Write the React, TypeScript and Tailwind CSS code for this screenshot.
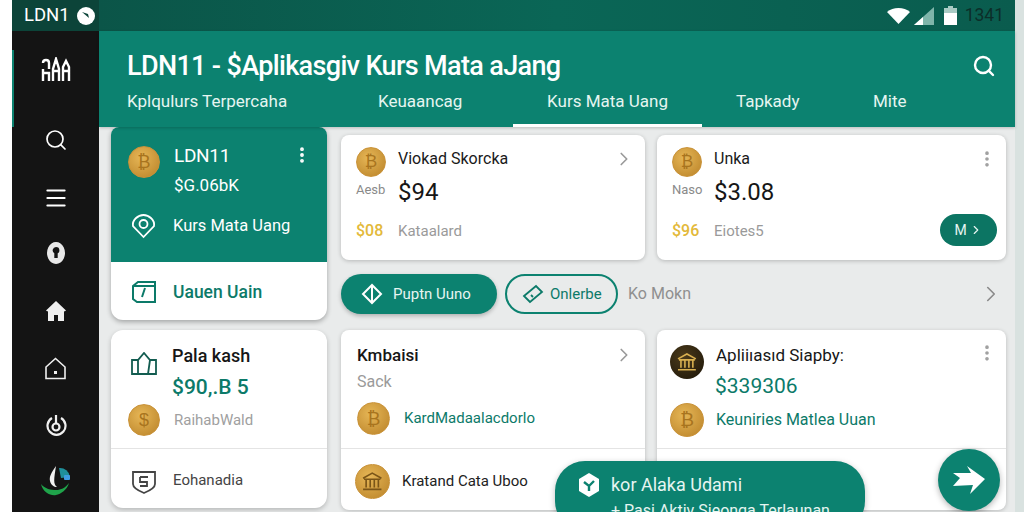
import React from 'react';
import { ChevronRight, EllipsisVertical, Menu, Search } from 'lucide-react';

const Coin = ({ size = 32, dark = false, bank = false, glyph = '₿' }: { size?: number; dark?: boolean; bank?: boolean; glyph?: string }) => (
  <div
    className={`shrink-0 rounded-full flex items-center justify-center font-['Liberation_Sans',sans-serif] ${
      dark
        ? 'bg-[radial-gradient(circle_at_40%_35%,#4a3a1a,#1c1408)] text-[#d9b050]'
        : 'bg-[radial-gradient(circle_at_40%_35%,#e6b656,#b98228)] text-[#a8741e] border border-[#c99238]'
    }`}
    style={{ width: size, height: size, fontSize: size * 0.56 }}
  >
    {bank ? (
      <svg viewBox="0 0 24 24" width={size * 0.7} height={size * 0.7} fill="none" stroke={dark ? '#d9b050' : '#7a5518'} strokeWidth="1.600">
        <path d="M3 9l9-5 9 5M4 10h16M6 10v8M10 10v8M14 10v8M18 10v8M3 20h18" />
      </svg>
    ) : (
      glyph
    )}
  </div>
);

const Rail = () => (
  <aside className="w-[87px] shrink-0 bg-[#141414] flex flex-col items-center text-white">
    <div className="w-full h-[31px] bg-[#0c4439] flex items-center pl-3 gap-[7px]">
      <span className="text-[18.500px] leading-none">LDN1</span>
      <svg width="18" height="18" viewBox="0 0 18 18"><circle cx="9" cy="9" r="9" fill="#fff" /><path d="M5 5l6 2 1 4z" fill="#0c4439" /></svg>
    </div>
    <div className="w-full flex flex-col items-center h-[96px] pt-[26px] relative">
      <div className="absolute left-0 top-[19px] bottom-0 w-[1.500px] bg-[#0c8270]" />
      <svg width="30" height="26" viewBox="0 0 30 26" fill="none" stroke="#fff" strokeWidth="2.400">
        <path d="M2 24V12M2 6c0-4 6-4 6 0v6M2 16h6v8M12 24V12l3-10 3 10v12M12 14h6M22 24V10l3-6 3 6v14M22 14h6M8 24V20" />
      </svg>
    </div>
    <Search className="mt-[1px]" size={24} strokeWidth={1.700} />
    <Menu className="mt-[33px]" size={26} strokeWidth={1.800} />
    <svg className="mt-[30px]" width="20" height="24" viewBox="0 0 20 24" fill="#e8e8e8">
      <path fillRule="evenodd" d="M10 1a9 11 0 1 0 .01 0zM10 6a3.400 3.400 0 0 1 3.400 3.400c0 1.300-.7 2.300-1.700 2.900V17h-3.400v-4.700A3.400 3.400 0 0 1 10 6z" />
    </svg>
    <svg className="mt-[35px]" width="22" height="22" viewBox="0 0 22 22" fill="#f0f0f0">
      <path d="M11 1l10 9.500-1.400 1L19 11v10h-6v-6H9v6H3V11l-.6.500L1 10.500z" />
    </svg>
    <svg className="mt-[35px]" width="23" height="23" viewBox="0 0 23 23" fill="none" stroke="#f0f0f0" strokeWidth="1.600">
      <path d="M2 10l9.500-8.500L21 10v11.500H2z" />
      <rect x="10" y="14" width="3" height="3" fill="#f0f0f0" stroke="none" />
    </svg>
    <svg className="mt-[33px]" width="22" height="24" viewBox="0 0 22 24" fill="none" stroke="#f0f0f0" strokeWidth="2.200">
      <path d="M7 5a9 9 0 1 0 9 0" />
      <circle cx="11" cy="14" r="3.500" />
      <path d="M11 2v8" />
    </svg>
    <svg className="mt-[27px]" width="32" height="32" viewBox="0 0 32 32" fill="none">
      <path d="M1 20c2 9 10 12 15 11s11-5 13-12c-4 5-8 7-13 7S5 25 1 20z" fill="#1fa34a" />
      <path d="M16 2c-5 7-7 11-6 15s4 6 7 6c-4-3-3-8-1-21z" fill="#f2f2f2" />
      <path d="M19 4a10 10 0 0 1 11 9l-9 1z" fill="#1f8f9a" />
      <rect x="24" y="11" width="6" height="5" rx="1" fill="#3f9be0" />
    </svg>
  </aside>
);

const StatusBar = () => (
  <div className="h-[31px] shrink-0 bg-[linear-gradient(90deg,#0b5548,#0a6656_50%,#0a5c4e)] flex items-center justify-end pr-[11px]">
    <svg width="23" height="16" viewBox="0 0 23 16" fill="#fff"><path d="M0 4c6-5.300 17-5.300 23 0L11.500 16z" /></svg>
    <svg className="ml-[4px]" width="20" height="18" viewBox="0 0 20 18"><path d="M0 18L20 0v18z" fill="#7fb5aa" /><path d="M0 18l9-8v8z" fill="#fff" /></svg>
    <svg className="ml-[10px]" width="13" height="19" viewBox="0 0 13 19"><path d="M4 0h5v2h4v17H0V2h4z" fill="#a9cbc4" /><rect y="7" width="13" height="12" fill="#fff" /></svg>
    <span className="ml-[8px] text-[17.500px] leading-none text-[#0c2e29]">1341</span>
  </div>
);

const Header = () => (
  <header className="h-[96px] shrink-0 bg-[#0c8270] text-white relative shadow-[0_1px_3px_rgba(0,0,0,0.2)]">
    <div className="flex items-center justify-between pl-[28px] pr-[19px] pt-[17px]">
      <h1 className="text-[27px] leading-[36px] font-medium whitespace-nowrap tracking-[-0.650px]">LDN11 - $Aplikasgiv Kurs Mata aJang</h1>
      <Search size={24} strokeWidth={2.400} />
    </div>
    <nav className="flex items-end h-[43px] text-[17px] text-[#e6f5f1]">
      <span className="ml-[28px] w-[251px] pb-[13px] whitespace-nowrap">Kplqulurs Terpercaha</span>
      <span className="w-[135px] pb-[13px] whitespace-nowrap">Keuaancag</span>
      <span className="w-[189px] h-full flex items-end justify-center pb-[10px] border-b-[3px] border-white whitespace-nowrap">Kurs Mata Uang</span>
      <span className="ml-[34px] w-[137px] pb-[13px] whitespace-nowrap">Tapkady</span>
      <span className="pb-[13px]">Mite</span>
    </nav>
  </header>
);

const FeatureColumn = () => (
  <div className="w-[216px] shrink-0 flex flex-col gap-[10px]">
    <div className="h-[193px] rounded-b-xl rounded-t-lg overflow-hidden bg-white shadow-[0_2px_5px_rgba(0,0,0,0.3)] flex flex-col">
      <div className="h-[135px] bg-[#0c8270] text-white pl-[17px] pr-[17px] pt-[19px]">
        <div className="flex items-start gap-[14px]">
          <Coin size={32} />
          <div className="flex-1 -mt-[2px]">
            <div className="text-[19px] leading-[24px] tracking-[-0.300px]">LDN11</div>
            <div className="text-[17px] leading-[24px] mt-[5px]">$G.06bK</div>
          </div>
          <EllipsisVertical size={20} strokeWidth={2.600} className="-mt-[1px] -mr-[2px]" />
        </div>
        <div className="flex items-center gap-[17px] mt-[16px] pl-[3px]">
          <svg width="25" height="26" viewBox="0 0 25 26" fill="none" stroke="#fff" strokeWidth="1.800">
            <path d="M12.500 24L2 13c-1-6 5-11 10.500-11S24 7 23 13z" />
            <circle cx="12.500" cy="11" r="4" />
          </svg>
          <span className="text-[16.500px] leading-none whitespace-nowrap">Kurs Mata Uang</span>
        </div>
      </div>
      <div className="flex-1 flex items-center gap-[16px] pl-[20px] pt-[3px] text-[#0c7a69]">
        <svg width="26" height="26" viewBox="0 0 26 26" fill="none" stroke="currentColor" strokeWidth="2">
          <path d="M2 6l5-4h17v20H6l-4-3zM2 6h22M11 17l3-9" />
        </svg>
        <span className="text-[17.500px] font-medium">Uauen Uain</span>
      </div>
    </div>
    <div className="h-[178px] rounded-xl bg-white shadow-[0_2px_5px_rgba(0,0,0,0.22)] flex flex-col">
      <div className="h-[118px] pl-[17px] pt-[14px] relative">
        <div className="flex items-start gap-[14px]">
          <svg className="mt-[8px] ml-[3px] mr-[1px]" width="26" height="23" viewBox="0 0 26 23" fill="none" stroke="#125c50" strokeWidth="1.800">
            <path d="M1 8h6l6-7 6 7h6v14H1zM7 8v14M19 8l-2 14" />
          </svg>
          <div>
            <div className="text-[18px] leading-[24px] font-medium text-[#161616]">Pala kash</div>
            <div className="text-[21px] leading-[26px] mt-[6px] text-[#0c7a69] font-medium">$90,.B 5</div>
          </div>
        </div>
        <div className="flex items-center gap-[14px] mt-[4px]">
          <Coin size={32} glyph="$" />
          <span className="text-[15px] text-[#a0a0a0]">RaihabWald</span>
        </div>
      </div>
      <div className="flex-1 border-t border-[#e4e4e4] flex items-center gap-[16px] pl-[20px] pt-[4px]">
        <svg width="26" height="26" viewBox="0 0 26 26" fill="none" stroke="#444" strokeWidth="1.800">
          <path d="M2 4h22v12c0 4-6 7-11 9-5-2-11-5-11-9z" />
          <path d="M9 9h8M9 9v5h7v4H9" />
        </svg>
        <span className="text-[15px] text-[#444]">Eohanadia</span>
      </div>
    </div>
  </div>
);

const TopCard = ({ coinGlyph, title, amount, side, gold, note, action }: { coinGlyph: string; title: string; amount: string; side: string; gold: string; note: string; action: React.ReactNode }) => (
  <div className="relative h-full bg-white rounded-lg shadow-[0_1px_4px_rgba(0,0,0,0.22)] pl-[15px] pr-[10px] pt-[12px]">
    <div className="flex items-center gap-[12px]">
      <Coin size={30} glyph={coinGlyph} />
      <span className="text-[16px] leading-[24px] mb-[6px] text-[#1a1a1a] whitespace-nowrap">{title}</span>
    </div>
    <div className="flex items-center gap-[13px] -mt-[2px]">
      <span className="w-[29px] text-[13px] mb-[4px] text-[#8a8a8a]">{side}</span>
      <span className="text-[24px] leading-[34px] text-[#161616]">{amount}</span>
    </div>
    <div className="flex items-center gap-[14px] mt-[10px]">
      <span className="w-[28px] text-[16px] font-medium text-[#e3b93a]">{gold}</span>
      <span className="text-[15px] text-[#9a9a9a]">{note}</span>
    </div>
    {action}
  </div>
);

const Pills = () => (
  <div className="h-[40px] flex items-center text-[15px]">
    <div className="w-[156px] h-[40px] rounded-full bg-[#0c8270] text-[#e6f5f1] flex items-center pl-[20px] gap-[10px] shadow-[0_2px_4px_rgba(0,0,0,0.25)]">
      <svg width="22" height="22" viewBox="0 0 22 22" fill="none" stroke="#fff" strokeWidth="2"><path d="M11 2L2 11l9 9 9-9zM11 2v18" /></svg>
      Puptn Uuno
    </div>
    <div className="ml-[8px] w-[113px] h-[40px] rounded-full border-2 border-[#0c8270] text-[#0c7a69] flex items-center pl-[15px] gap-[6px]">
      <svg width="22" height="22" viewBox="0 0 22 22" fill="none" stroke="currentColor" strokeWidth="1.800"><path d="M2 13L14 3l6 6L8 19zM9 12l2 2" /></svg>
      Onlerbe
    </div>
    <span className="ml-[10px] text-[16px] text-[#8f8f8f]">Ko Mokn</span>
    <ChevronRight className="ml-auto mr-[2px] text-[#8a8a8a]" size={26} strokeWidth={1.500} />
  </div>
);

const BottomCards = () => (
  <div className="flex gap-[12px] h-[180px]">
    <div className="w-[304px] relative bg-white rounded-lg shadow-[0_1px_4px_rgba(0,0,0,0.2)] flex flex-col">
      <ChevronRight className="absolute right-[10px] top-[14px] text-[#999]" size={22} strokeWidth={1.800} />
      <div className="h-[118px] pl-[16px] pt-[13px]">
        <div className="text-[17px] leading-[24px] font-medium text-[#161616]">Kmbaisi</div>
        <div className="text-[16px] leading-[24px] mt-[3px] text-[#9a9a9a]">Sack</div>
        <div className="flex items-center gap-[14px] mt-[8px]">
          <Coin size={33} />
          <span className="text-[15px] text-[#0c7a69] whitespace-nowrap">KardMadaalacdorlo</span>
        </div>
      </div>
      <div className="flex-1 border-t border-[#e4e4e4] flex items-center pl-[14px] pt-[3px] gap-[12px]">
        <Coin size={35} bank />
        <span className="text-[15px] text-[#222] whitespace-nowrap">Kratand Cata Uboo</span>
      </div>
    </div>
    <div className="flex-1 relative bg-white rounded-lg shadow-[0_1px_4px_rgba(0,0,0,0.2)] flex flex-col">
      <EllipsisVertical className="absolute right-[9px] top-[13px] text-[#a0a0a0]" size={20} strokeWidth={2.400} />
      <div className="h-[118px] pl-[13px] pt-[15px]">
        <div className="flex items-center gap-[12px]">
          <Coin size={34} dark bank />
          <span className="text-[17px] leading-[20px] mb-[14px] text-[#161616] whitespace-nowrap">Apliiıasıd Siapby:</span>
        </div>
        <div className="text-[21px] leading-[26px] -mt-[6px] ml-[45px] text-[#0c7a69]">$339306</div>
        <div className="flex items-center gap-[12px] mt-[4px]">
          <Coin size={34} />
          <span className="text-[16px] text-[#0c7a69] whitespace-nowrap">Keuniries Matlea Uuan</span>
        </div>
      </div>
      <div className="flex-1 border-t border-[#e4e4e4]" />
    </div>
  </div>
);

export default function App() {
  return (
    <div className="relative w-[1024px] h-[512px] overflow-hidden flex bg-white font-['Roboto',sans-serif]">
      <div className="w-3 shrink-0 bg-white" />
      <Rail />
      <div className="flex-1 min-w-0 flex flex-col bg-[#d9e2e0]">
        <div className="w-[916px] flex flex-col h-full bg-[#e9ebeb]">
          <StatusBar />
          <Header />
          <main className="flex-1 flex gap-[14px] pl-[12px] min-h-0">
            <FeatureColumn />
            <div className="w-[665px] shrink-0 flex flex-col pt-[8px] gap-[14px]">
              <div className="flex gap-[12px] h-[125px]">
                <div className="w-[304px]">
                  <TopCard
                    coinGlyph="₿"
                    title="Viokad Skorcka"
                    side="Aesb"
                    amount="$94"
                    gold="$08"
                    note="Kataalard"
                    action={<ChevronRight className="absolute right-[10px] top-[13px] text-[#999]" size={22} strokeWidth={1.800} />}
                  />
                </div>
                <div className="flex-1">
                  <TopCard
                    coinGlyph="₿"
                    title="Unka"
                    side="Naso"
                    amount="$3.08"
                    gold="$96"
                    note="Eiotes5"
                    action={
                      <>
                        <EllipsisVertical className="absolute right-[9px] top-[14px] text-[#a0a0a0]" size={20} strokeWidth={2.400} />
                        <div className="absolute right-[9px] bottom-[14px] w-[57px] h-[32px] rounded-full bg-[#0c7563] text-[#e6f5f1] text-[14px] flex items-center justify-center gap-[2px]">
                          M <ChevronRight size={14} />
                        </div>
                      </>
                    }
                  />
                </div>
              </div>
              <Pills />
              <div className="mt-[2px]">
                <BottomCards />
              </div>
            </div>
          </main>
        </div>
      </div>
      <div className="absolute left-[555px] top-[461px] w-[310px] h-[70px] rounded-[30px] bg-[#0c8270] text-[#e6f5f1] shadow-[0_2px_6px_rgba(0,0,0,0.25)] pl-[22px] pt-[10px]">
        <div className="flex items-center gap-[10px]">
          <svg width="24" height="24" viewBox="0 0 24 24"><path d="M12 0l10 6v12l-10 6-10-6V6z" fill="#fff" /><path d="M7 9l5 4 5-5M12 13v5" stroke="#0c8270" strokeWidth="2.400" fill="none" /></svg>
          <span className="text-[18px] whitespace-nowrap">kor Alaka Udami</span>
        </div>
        <div className="text-[16px] ml-[34px] mt-[1px] whitespace-nowrap">+ Pasi Aktiv Sieonga Terlaunan</div>
      </div>
      <div className="absolute left-[938px] top-[449px] w-[62px] h-[62px] rounded-full bg-[#0c8270] shadow-[0_2px_6px_rgba(0,0,0,0.3)] flex items-center justify-center">
        <svg width="34" height="30" viewBox="0 0 34 30" fill="#fff"><path d="M15 1l18 13-15 15 3-9-20 1 7-8-7-5h18z" /></svg>
      </div>
    </div>
  );
}
